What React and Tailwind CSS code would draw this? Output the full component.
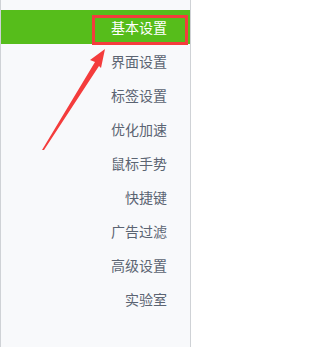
import React from 'react';

const items = ['基本设置', '界面设置', '标签设置', '优化加速', '鼠标手势', '快捷键', '广告过滤', '高级设置', '实验室'];

const App = () => {
    return (
        <div className="relative w-[218px] h-[347px] bg-white overflow-hidden" style={{ fontFamily: '"Noto Sans CJK SC", "Noto Sans", sans-serif' }}>
            <div className="w-[191px] h-full bg-[#f8f9fb] border-l border-r border-[#cfd2d6] pt-[10px] flex flex-col">
                {items.map((item, i) => (
                    <div
                        key={item}
                        className={
                            i === 0
                                ? 'h-[34px] flex items-center justify-end pr-[23px] bg-[#56bd1b] text-white text-[14px]'
                                : 'h-[34px] flex items-center justify-end pr-[23px] text-[#5b6472] text-[14px]'
                        }
                    >
                        {item}
                    </div>
                ))}
            </div>

            {/* red highlight box */}
            <div className="absolute left-[92px] top-[15px] w-[96px] h-[30px] border-[3px] border-[#f43c3c]" />

            {/* arrow */}
            <svg className="absolute left-0 top-0" width="218" height="347" viewBox="0 0 218 347">
                <polygon points="105,49 90,60 95,62 42,150 44,150 99,66 101,68" fill="#f43c3c" />
            </svg>
        </div>
    );
};

export default App;
